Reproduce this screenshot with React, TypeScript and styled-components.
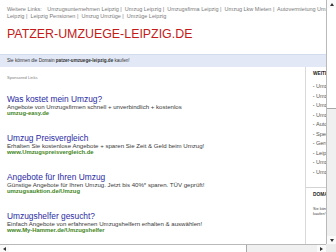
import React from "react";
import styled, { createGlobalStyle } from "styled-components";

const GlobalStyle = createGlobalStyle`
  html, body { margin: 0; padding: 0; overflow: hidden; background: #fff; }
  #root { width: 336px; height: 252px; }
`;

const Frame = styled.div`
  width: 336px;
  height: 252px;
  display: grid;
  grid-template-columns: 1fr 10px;
  grid-template-rows: 1fr 8px;
  font-family: "Liberation Sans", Arial, sans-serif;
`;

const Viewport = styled.div`
  overflow: hidden;
  background: #fff;
`;

const Page = styled.div`
  width: 480px;
`;

const TopLinks = styled.div`
  padding: 6px 7px 0;
  font-size: 5.5px;
  line-height: 6.6px;
  color: #7a7a7a;
  white-space: nowrap;
`;

const Label = styled.span`
  margin-right: 4px;
`;

const Title = styled.h1`
  margin: 9px 0 0 7px;
  font-weight: normal;
  font-size: 12.4px;
  line-height: 13px;
  color: #c41a1a;
`;

const Band = styled.div`
  margin-top: 13px;
  height: 13px;
  background: #e2e8f5;
  border-top: 1px solid #d3dbee;
  box-sizing: border-box;
  padding-left: 7px;
  font-size: 4.6px;
  line-height: 12px;
  color: #333;
  white-space: nowrap;
  b { font-weight: bold; }
`;

const Body = styled.div`
  display: flex;
  align-items: stretch;
  min-height: 190px;
`;

const Main = styled.div`
  width: 298px;
  padding-left: 7px;
  flex: none;
`;

const Sponsored = styled.div`
  margin-top: 8px;
  font-size: 4.1px;
  line-height: 6px;
  color: #808080;
`;

const AdList = styled.div`
  display: flex;
  flex-direction: column;
  gap: 16px;
  margin-top: 13.5px;
`;

const Ad = styled.div`
  display: flex;
  flex-direction: column;
  white-space: nowrap;
`;

const AdTitle = styled.div`
  font-size: 8.4px;
  line-height: 9px;
  color: #2a2aa4;
`;

const AdDesc = styled.div`
  font-size: 6.1px;
  line-height: 6.5px;
  color: #3a3a3a;
`;

const AdUrl = styled.div`
  font-size: 5.9px;
  line-height: 7.5px;
  font-weight: bold;
  color: #428522;
`;

const Sidebar = styled.div`
  flex: 1;
  border-left: 1px solid #d9d9d9;
  padding-top: 4px;
  white-space: nowrap;
`;

const SideSection = styled.div`
  padding: 0 0 0 7px;
`;

const SideHeading = styled.div`
  font-size: 4.8px;
  line-height: 6px;
  font-weight: bold;
  color: #222;
`;

const SideList = styled.ul`
  list-style: none;
  margin: 5px 0 10px;
  padding: 0;
`;

const SideItem = styled.li`
  font-size: 5.6px;
  line-height: 9.5px;
  color: #555;
  &::before {
    content: "•";
    font-size: 4px;
    margin-right: 1.5px;
    color: #777;
  }
`;

const Divider = styled.div`
  border-top: 1px solid #d4d4d4;
  padding-top: 3.5px;
`;

const SideText = styled.div`
  margin-top: 8px;
  font-size: 3.9px;
  line-height: 5px;
  color: #444;
`;

const VScroll = styled.div`
  display: flex;
  flex-direction: column;
  background: #f0f0f0;
  border-left: 1px solid #b9b9b9;
  box-sizing: border-box;
`;

const HScroll = styled.div`
  display: flex;
  background: #f0f0f0;
  border-top: 1px solid #b9b9b9;
  box-sizing: border-box;
`;

const Corner = styled.div`
  background: #ececec;
`;

const ArrowBtn = styled.div<{ $v?: boolean }>`
  flex: none;
  width: ${(p) => (p.$v ? "100%" : "9px")};
  height: ${(p) => (p.$v ? "8px" : "100%")};
  display: flex;
  align-items: center;
  justify-content: center;
  background: #fafafa;
`;

const VThumb = styled.div`
  height: 100px;
  background: #ffffff;
  border-bottom: 1px solid #a9a9a9;
  flex: none;
`;

const HThumb = styled.div`
  width: 237px;
  background: #ffffff;
  border-right: 1px solid #a9a9a9;
  flex: none;
`;

const Track = styled.div`
  flex: 1;
`;

const Tri = ({ dir }: { dir: "up" | "down" | "left" | "right" }) => {
  const pts = {
    up: "0,3 2,0 4,3",
    down: "0,0 4,0 2,3",
    left: "3,0 3,4 0,2",
    right: "0,0 0,4 3,2",
  }[dir];
  const vert = dir === "up" || dir === "down";
  return (
    <svg width={vert ? 4 : 3} height={vert ? 3 : 4} viewBox={vert ? "0 0 4 3" : "0 0 3 4"}>
      <polygon points={pts} fill="#333" />
    </svg>
  );
};

const sideLinks = [
  "Umzugsunternehmen Leipzig",
  "Umzug Leipzig",
  "Umzugsfirma Leipzig",
  "Umzug Lkw Mieten",
  "Autovermietung Umzug",
  "Spedition Leipzig",
  "Gerümpel Leipzig",
  "Leipzig Pensionen",
  "Umzug Umzüge",
  "Umzüge Leipzig",
];

const ads = [
  {
    title: "Was kostet mein Umzug?",
    desc: "Angebote von Umzugsfirmen schnell + unverbindlich + kostenlos",
    url: "umzug-easy.de",
  },
  {
    title: "Umzug Preisvergleich",
    desc: "Erhalten Sie kostenlose Angebote + sparen Sie Zeit & Geld beim Umzug!",
    url: "www.Umzugspreisvergleich.de",
  },
  {
    title: "Angebote für Ihren Umzug",
    desc: "Günstige Angebote für Ihren Umzug. Jetzt bis 40%* sparen. TÜV geprüft!",
    url: "umzugsauktion.de/Umzug",
  },
  {
    title: "Umzugshelfer gesucht?",
    desc: "Einfach Angebote von erfahrenen Umzugshelfern erhalten & auswählen!",
    url: "www.My-Hammer.de/Umzugshelfer",
  },
];

export default function App() {
  return (
    <>
      <GlobalStyle />
      <Frame>
        <Viewport>
          <Page>
            <TopLinks>
              <div>
                <Label>Weitere Links:</Label> Umzugsunternehmen Leipzig&nbsp;|&nbsp; Umzug Leipzig&nbsp;|&nbsp; Umzugsfirma Leipzig&nbsp;|&nbsp; Umzug Lkw Mieten&nbsp;|&nbsp; Autovermietung Umzug&nbsp;|&nbsp; Spedition Leipzig&nbsp;|&nbsp; Gerümpel
              </div>
              <div>Leipzig&nbsp;|&nbsp; Leipzig Pensionen&nbsp;|&nbsp; Umzug Umzüge&nbsp;|&nbsp; Umzüge Leipzig</div>
            </TopLinks>
            <Title>PATZER-UMZUEGE-LEIPZIG.DE</Title>
            <Band>
              Sie können die Domain <b>patzer-umzuege-leipzig.de</b> kaufen!
            </Band>
            <Body>
              <Main>
                <Sponsored>Sponsored Links</Sponsored>
                <AdList>
                  {ads.map((a) => (
                    <Ad key={a.url}>
                      <AdTitle>{a.title}</AdTitle>
                      <AdDesc>{a.desc}</AdDesc>
                      <AdUrl>{a.url}</AdUrl>
                    </Ad>
                  ))}
                </AdList>
              </Main>
              <Sidebar>
                <SideSection>
                  <SideHeading>WEITERE LINKS</SideHeading>
                  <SideList>
                    {sideLinks.map((l) => (
                      <SideItem key={l}>{l}</SideItem>
                    ))}
                  </SideList>
                </SideSection>
                <Divider>
                  <SideSection>
                    <SideHeading>DOMAIN KAUFEN</SideHeading>
                    <SideText>
                      Sie können die Domain patzer-umzuege-leipzig.de
                      <br />
                      kaufen!
                    </SideText>
                  </SideSection>
                </Divider>
              </Sidebar>
            </Body>
          </Page>
        </Viewport>
        <VScroll>
          <ArrowBtn $v>
            <Tri dir="up" />
          </ArrowBtn>
          <VThumb />
          <Track />
          <ArrowBtn $v>
            <Tri dir="down" />
          </ArrowBtn>
        </VScroll>
        <HScroll>
          <ArrowBtn>
            <Tri dir="left" />
          </ArrowBtn>
          <HThumb />
          <Track />
          <ArrowBtn>
            <Tri dir="right" />
          </ArrowBtn>
        </HScroll>
        <Corner />
      </Frame>
    </>
  );
}
